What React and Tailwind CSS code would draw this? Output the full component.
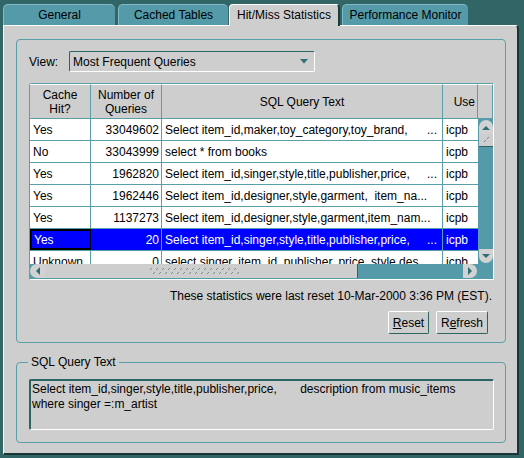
import React from "react";

const rows = [
  { hit: "Yes", n: "33049602", sql: "Select item_id,maker,toy_category,toy_brand,", dots: true, user: "icpb" },
  { hit: "No", n: "33043999", sql: "select * from books", dots: false, user: "icpb" },
  { hit: "Yes", n: "1962820", sql: "Select item_id,singer,style,title,publisher,price,", dots: true, user: "icpb" },
  { hit: "Yes", n: "1962446", sql: "Select item_id,designer,style,garment,  item_na...", dots: false, user: "icpb" },
  { hit: "Yes", n: "1137273", sql: "Select item_id,designer,style,garment,item_nam...", dots: false, user: "icpb" },
  { hit: "Yes", n: "20", sql: "Select item_id,singer,style,title,publisher,price,", dots: true, user: "icpb", sel: true },
  { hit: "Unknown", n: "0", sql: "select singer, item_id, publisher, price, style,des", dots: false, user: "icpb" },
];

function Grip({ w = 90 }) {
  const lines = [];
  for (let x = 0; x < w; x += 6) {
    lines.push(<line key={"a" + x} x1={x} y1={3} x2={x + 2} y2={1} />);
    lines.push(<line key={"b" + x} x1={x + 3} y1={7} x2={x + 5} y2={5} />);
  }
  return (
    <svg width={w} height={8} stroke="#6f8f90" strokeWidth="1">
      {lines}
    </svg>
  );
}

function Tri({ dir }) {
  const pts = {
    up: "1,6 5,2 9,6",
    down: "1,2 5,6 9,2",
    left: "6,1 2,5 6,9",
    right: "2,1 6,5 2,9",
  }[dir];
  const vb = dir === "up" || dir === "down" ? "0 0 10 8" : "0 0 8 10";
  const w = dir === "up" || dir === "down" ? 10 : 8;
  const h = dir === "up" || dir === "down" ? 8 : 10;
  return (
    <svg width={w} height={h} viewBox={vb}>
      <polygon points={pts} fill="#2f6e76" />
    </svg>
  );
}

export default function App() {
  return (
    <div className="w-[524px] h-[458px] bg-[#326666] overflow-hidden text-[12px] leading-[14px] text-black font-['Liberation_Sans',Arial,sans-serif]">
      {/* Tabs */}
      <div className="h-[25px] flex items-end pl-[3px]">
        <div className="w-[112px] h-[21px] bg-[#549aa8] rounded-t-[5px] border-t border-l border-[#80bcc6] flex items-center justify-center">
          General
        </div>
        <div className="ml-[3px] w-[110px] h-[21px] bg-[#549aa8] rounded-t-[5px] border-t border-l border-[#80bcc6] flex items-center justify-center">
          Cached Tables
        </div>
        <div className="relative z-10 ml-[1px] mb-[-1px] w-[111px] h-[22px] bg-[#cecece] rounded-t-[4px] border-t border-l border-white border-r-2 border-r-[#1e3a3a] flex items-center justify-center pb-[1px]">
          Hit/Miss Statistics
        </div>
        <div className="ml-[2px] w-[126px] h-[21px] bg-[#549aa8] rounded-t-[5px] border-t border-l border-[#80bcc6] flex items-center justify-center">
          Performance Monitor
        </div>
      </div>

      {/* Panel */}
      <div className="ml-[3px] w-[516px] h-[430px] bg-[#cecece] border-t border-l border-white border-r-2 border-b-2 border-r-[#1b3434] border-b-[#1b3434] rounded-tr-[4px] pl-[12px] pt-[13px]">
        {/* Group 1 */}
        <div className="w-[490px] h-[304px] border border-[#5a9ea9] rounded-[4px] pl-[12px] pt-[11px]">
          <div className="flex items-center h-[21px]">
            <div className="w-[40px]">View:</div>
            <div className="w-[246px] h-[21px] border-t border-l border-[#2c6464] border-r border-b border-r-white border-b-white rounded-[2px] flex items-center pl-[3px] pr-[6px]">
              <span className="flex-1">Most Frequent Queries</span>
              <svg width="8" height="5" viewBox="0 0 8 5">
                <polygon points="0,0 8,0 4,4.5" fill="#2f6e76" />
              </svg>
            </div>
          </div>

          {/* Table */}
          <div className="mt-[11px] w-[465px] h-[197px] border-t border-l border-[#5a9ea9] border-r border-b border-r-white border-b-white rounded-tl-[3px] flex flex-col">
            {/* Header */}
            <div className="flex h-[35px] border-b border-[#5a9ea9]">
              <div className="w-[61px] border-r border-[#5a9ea9] border-t border-t-white flex flex-col items-center justify-center">
                <span>Cache</span>
                <span>Hit?</span>
              </div>
              <div className="w-[71px] border-r border-[#5a9ea9] border-t border-t-white flex flex-col items-center justify-center">
                <span>Number of</span>
                <span>Queries</span>
              </div>
              <div className="w-[281px] border-r border-[#5a9ea9] border-t border-t-white flex items-center justify-center">
                SQL Query Text
              </div>
              <div className="w-[35px] border-r border-[#5a9ea9] border-t border-t-white flex items-center justify-end pr-[2px]">
                Use
              </div>
              <div className="w-[15px] border-t border-t-white border-r border-r-[#5a9ea9]"></div>
            </div>

            {/* Body */}
            <div className="flex h-[145px]">
              <div className="w-[448px] overflow-hidden flex flex-col">
                {rows.map((r, i) => (
                  <div
                    key={i}
                    className={
                      "flex shrink-0 h-[22px] border-b border-[#5a9ea9] " +
                      (r.sel ? "bg-[#0000ff] text-white" : "bg-white")
                    }
                  >
                    <div
                      className={
                        "w-[61px] border-r border-[#5a9ea9] flex items-center " +
                        (r.sel ? "border-2 border-black pl-[2px]" : "pl-[3px]")
                      }
                    >
                      {r.hit}
                    </div>
                    <div className="w-[71px] border-r border-[#5a9ea9] flex items-center justify-end pr-[2px]">
                      {r.n}
                    </div>
                    <div className="w-[281px] border-r border-[#5a9ea9] flex items-center pl-[3px] pr-[5px] whitespace-pre overflow-hidden">
                      <span className="flex-1">{r.sql}</span>
                      {r.dots && <span>...</span>}
                    </div>
                    <div className="w-[35px] flex items-center pl-[3px]">{r.user}</div>
                  </div>
                ))}
              </div>
              {/* Vertical scrollbar */}
              <div className="w-[15px] bg-[#549aa8] flex flex-col items-center pt-[1px] pb-[1px]">
                <div className="w-[14px] h-[14px] bg-[#d2d2d2] rounded-t-[7px] flex items-center justify-center pt-[1px]">
                  <Tri dir="up" />
                </div>
                <div className="w-[14px] h-[13px] bg-[#cecece] border-b border-[#2c6464] flex items-center justify-center">
                  <svg width="8" height="8" stroke="#6f8f90" strokeWidth="1">
                    <line x1="2" y1="6" x2="4" y2="4" />
                    <line x1="5" y1="3" x2="7" y2="1" />
                  </svg>
                </div>
                <div className="flex-1"></div>
                <div className="w-[14px] h-[14px] bg-[#d2d2d2] rounded-b-[7px] flex items-center justify-center pb-[1px]">
                  <Tri dir="down" />
                </div>
              </div>
            </div>

            {/* Horizontal scrollbar */}
            <div className="flex h-[15px] bg-[#549aa8]">
              <div className="w-[15px] h-[14px] bg-[#d2d2d2] rounded-l-[7px] flex items-center justify-center">
                <Tri dir="left" />
              </div>
              <div className="w-[313px] h-[14px] bg-[#cecece] border-r border-[#2c6464] flex items-center pl-[105px]">
                <Grip w={90} />
              </div>
              <div className="flex-1"></div>
              <div className="w-[14px] h-[14px] bg-[#d2d2d2] rounded-r-[7px] flex items-center justify-center mr-[16px]">
                <Tri dir="right" />
              </div>
            </div>
          </div>

          <div className="mt-[9px] text-right pr-[13px]">
            These statistics were last reset 10-Mar-2000 3:36 PM (EST).
          </div>

          <div className="mt-[8px] flex justify-end gap-[7px] mr-[17px]">
            <button className="w-[41px] h-[23px] bg-[#cecece] border-t border-l border-white border-r border-b border-r-[#2c6464] border-b-[#2c6464] rounded-[2px] flex items-center justify-center">
              <span><u>R</u>eset</span>
            </button>
            <button className="w-[52px] h-[23px] bg-[#cecece] border-t border-l border-white border-r border-b border-r-[#2c6464] border-b-[#2c6464] rounded-[2px] flex items-center justify-center">
              <span>R<u>e</u>fresh</span>
            </button>
          </div>
        </div>

        {/* Group 2 */}
        <div className="relative mt-[19px] w-[490px] h-[81px] border border-[#5a9ea9] rounded-[4px]">
          <span className="absolute left-[11px] top-[-8px] px-[3px] bg-[#cecece] leading-[14px]">SQL Query Text</span>
          <div className="mt-[16px] ml-[12px] w-[465px] h-[51px] border-t-2 border-l-2 border-[#2c6464] border-r border-b border-r-white border-b-white rounded-[2px] pl-[1px] pt-[1px] leading-[15px] whitespace-pre">
            <div>Select item_id,singer,style,title,publisher,price,       description from music_items</div>
            <div>where singer =:m_artist</div>
          </div>
        </div>
      </div>
    </div>
  );
}
